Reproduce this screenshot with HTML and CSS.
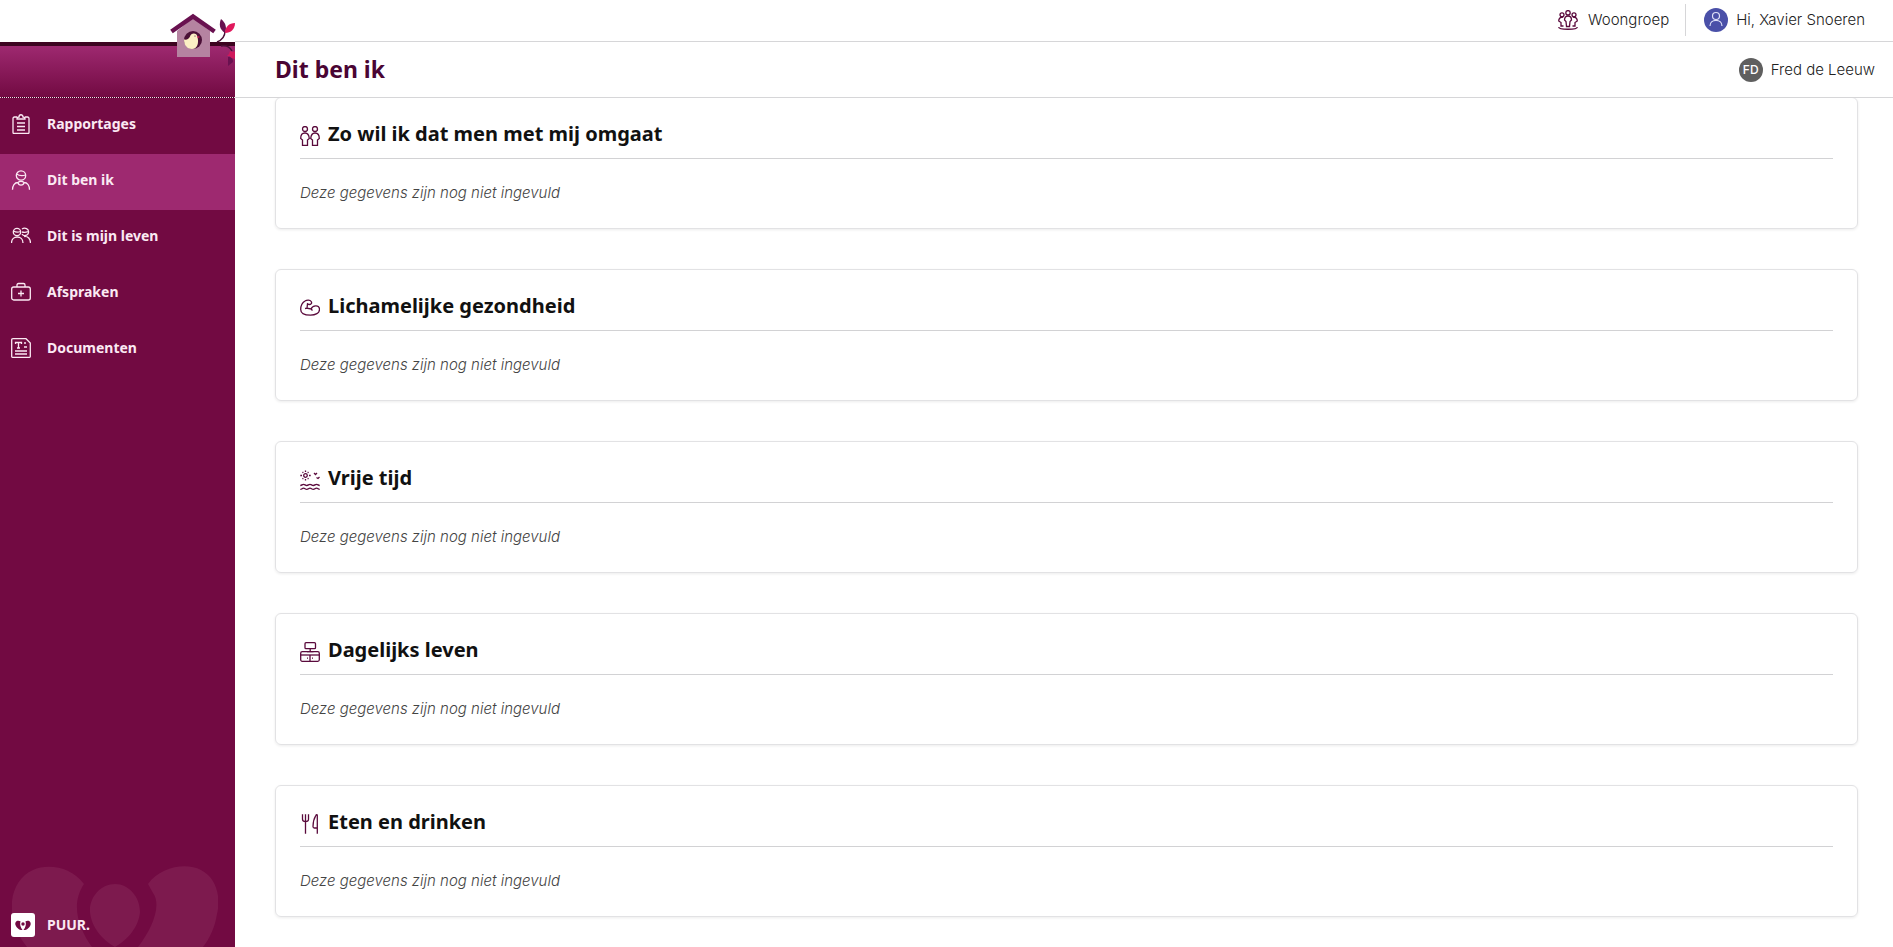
FILE: index.html
```html
<!DOCTYPE html>
<html lang="nl">
<head>
<meta charset="utf-8">
<title>Dit ben ik</title>
<link rel="stylesheet" href="styles.css">
</head>
<body>
<div class="app">
  <aside class="sidebar">
    <div class="brand">
      <svg class="birdhouse" viewBox="170 12 65 54" aria-hidden="true">
        <path d="M177 31 193 18 210 31V57H177Z" fill="#b583a1"/>
        <path d="M171.500 31.500 193 16.500 214.500 31.500" fill="none" stroke="#691150" stroke-width="4.500"/>
        <circle cx="193" cy="40" r="9" fill="#4b1037"/>
        <path d="M184 39.500c3 .5 5-.5 6-3 1-4 7-4 7.500.5 1.500 6 0 12-5.500 12-5 0-8-4-8-9.500z" fill="#fbefc4"/>
        <path d="m197.500 36 2.500 1-2.500 1z" fill="#e0205c"/><circle cx="195" cy="36" r=".6" fill="#4b1037"/>
        <path d="M217 42c5-2 8-6 8-11" fill="none" stroke="#4b1037" stroke-width="1.400"/>
        <path d="M225 33c-6-4-6-9-4-14 5 4 6 9 4 14z" fill="#691150"/>
        <path d="M225 33c0-6 4-10 10-10 0 6-4 10-10 10z" fill="#e0185c"/>
        <path d="M221 46c5-1 9 1 11 5" fill="none" stroke="#4b1037" stroke-width="1.400"/>
        <path d="M230 51l3 1 2-1v8l-3-1-1 1-1-3-3 0 2-2z" fill="#d0185c"/>
        <path d="M228 57c4 0 5 2 5 5l-5 4z" fill="#691150"/>
      </svg>
    </div>
    <nav class="menu">
      <a class="item" href="#rapportages">
        <svg class="icon" viewBox="0 0 20 20" aria-hidden="true"><path d="M6 3H3.500C2.500 3 2 3.500 2 4.500v14c0 .6.400 1 1 1h14c.6 0 1-.4 1-1v-14C18 3.500 17.500 3 16.500 3H14M6 5h8c0-1.500-.5-2-2-2 0-3-4-3-4 0-1.500 0-2 .5-2 2zM6 9h8M6 12.500h8M6 16h8"/></svg>
        <span>Rapportages</span></a>
      <a class="item active" href="#ditbenik" aria-current="page">
        <svg class="icon" viewBox="0 0 20 20" aria-hidden="true"><circle cx="10" cy="5.500" r="4.700"/><path d="M5.500 4c3 2 6 2 9 1M1.500 19.800c0-4 2-7.300 5.500-7.300 .5 3.500 5.500 3.500 6 0 3.500 0 5.500 3.300 5.500 7.300M7 12.500c1.500-1.500 4.500-1.500 6 0"/></svg>
        <span>Dit ben ik</span></a>
      <a class="item" href="#leven">
        <svg class="icon" viewBox="0 0 20 20" aria-hidden="true"><circle cx="6" cy="6" r="3.700"/><path d="M2.500 5c2.500 1.500 4.500 1.500 7 .5M.5 17c0-8 11.500-8 11.500 0M11 3c3-2 7 0 6.500 3.500S12.500 10.500 11 8M11 6c2 .5 4 .5 6-.5M13 10.500c4-.5 6.500 2.500 6.500 6.500"/></svg>
        <span>Dit is mijn leven</span></a>
      <a class="item" href="#afspraken">
        <svg class="icon" viewBox="0 0 20 20" aria-hidden="true"><rect x=".7" y="5" width="18.600" height="13" rx="2"/><path d="M6 5V3c0-1 .5-1.500 1.500-1.500h5C13.500 1.500 14 2 14 3v2M10 8.500v6M7 11.500h6"/></svg>
        <span>Afspraken</span></a>
      <a class="item" href="#documenten">
        <svg class="icon" viewBox="0 0 20 20" aria-hidden="true"><path d="M2 .7h13L19.300 5v13.500c0 .5-.3.800-.8.800H1.500c-.5 0-.8-.3-.8-.8V2C.7 1 1 .7 2 .7zM4.500 6V4.500h6V6M7.500 4.500V10M6 10h3M13 5h2M13 9h3M4 13h12M4 16h12"/></svg>
        <span>Documenten</span></a>
    </nav>
    <svg class="watermark" viewBox="12 866 206 81" aria-hidden="true">
      <path d="M84 884C72 867 48 863 33 870 17 877 10 895 12 913c2 14 7 24 15 34H92C79 929 70 905 84 884zM148 884c12-17 38-22 53-14 16 8 20 28 16 44-2 13-7 24-14 33H138c14-18 24-42 15-54zM115 884c-14 0-26 13-25 28 1 14 12 28 25 35 13-7 24-21 25-35 0-15-11-28-25-28z"/>
    </svg>
    <a class="puur" href="#puur">
      <svg class="puur-logo" viewBox="0 0 24 24" aria-hidden="true"><rect width="24" height="24" rx="3" fill="#fff"/><path d="M9.500 8.200C6 6.500 3.500 9 4.500 12c1 3 4 5.300 7 5C9.500 14.500 8.500 11 9.500 8.200zM14.500 8.200c3.500-1.700 6 .8 5 3.800-1 3-4 5.300-7 5 2-2.500 3-6 2-8.800z" fill="#720a42"/><circle cx="12" cy="11" r="1.700" fill="#720a42"/></svg>
      <span>PUUR.</span></a>
  </aside>
  <div class="page">
    <header class="header">
      <div class="topbar">
        <a class="group" href="#woongroep">
          <svg class="icon plum" viewBox="0 0 20 20" aria-hidden="true"><circle cx="10" cy="2.800" r="2.200"/><circle cx="4" cy="4.800" r="2"/><circle cx="16" cy="4.800" r="2"/><path d="M8.500 16.500 8 11.500 6.500 10c0-3 1.500-4 3.500-4s3.500 1 3.500 4L12 11.500l-.5 5zM5.500 16H3v-3.500L.7 11c0-3 1.500-4 4.500-4M14.500 16H17v-3.500l2.300-1.500c0-3-1.500-4-4.500-4M.7 17c0 3 18.600 3 18.600 0"/></svg>
          <span>Woongroep</span></a>
        <a class="user" href="#profiel">
          <svg class="avatar" viewBox="0 0 24 24" aria-hidden="true"><circle cx="12" cy="12" r="12" fill="#4a50a8"/><g fill="none" stroke="#dfe1f8" stroke-width="1.200"><circle cx="12" cy="8" r="3.500"/><path d="M6 18c0-7.500 12-7.500 12 0"/></g></svg>
          <span>Hi, Xavier Snoeren</span></a>
      </div>
      <div class="titlebar">
        <h1 class="title">Dit ben ik</h1>
        <a class="client" href="#client"><span class="initials">FD</span><span>Fred de Leeuw</span></a>
      </div>
    </header>
    <main class="cards">
      <section class="card">
        <h2 class="card-title"><svg class="icon plum" viewBox="0 0 20 20" aria-hidden="true"><circle cx="5" cy="3" r="2.500"/><circle cx="15" cy="3" r="2.500"/><path d="M2.500 19.300V14L.7 12.500C.7 9 2 7 5 7s4 2 4.300 5.500L7.500 14v5.300zM12.500 19.300V14l-1.800-1.500C11 9 12 7 15 7s4.300 2 4.300 5.500L17.500 14v5.300z"/></svg><span>Zo wil ik dat men met mij omgaat</span></h2>
        <p class="empty">Deze gegevens zijn nog niet ingevuld</p>
      </section>
      <section class="card">
        <h2 class="card-title"><svg class="icon plum" viewBox="0 0 20 20" aria-hidden="true"><path d="M5 3C7 1.700 10 1.700 11.200 3.500c1 1.500 0 3-2.200 3l-1.500-.8-.5 4.500L11 11C13 6.500 19.500 7 19.500 11.500c0 3.500-4 5.700-9 5.700-6 0-9.800-1.500-9.800-5.700C.7 8 2.500 4.500 5 3zM5 10.500l2-.3M11 11l1.500 1.500"/></svg><span>Lichamelijke gezondheid</span></h2>
        <p class="empty">Deze gegevens zijn nog niet ingevuld</p>
      </section>
      <section class="card">
        <h2 class="card-title"><svg class="icon plum" viewBox="0 0 20 20" aria-hidden="true"><circle cx="5.500" cy="5.500" r="1.800"/><path d="M5.500.5V2M5.500 9v1.500M.3 5.500H2M9 5.500h1.700M2.500 2l.8.8M8.500 2l-.8.8M2.500 9l.8-.8M8.500 9l-.8-.8M14 3l1.500 1.500L17 3M16.500 7.500l1.500 1 1.500-1.500M.3 15.500C2 15.500 2 14.300 3.500 14.300s1.700 1.200 3.300 1.200 1.700-1.200 3.200-1.200 1.700 1.200 3.300 1.200 1.700-1.200 3.200-1.200 1.700 1.200 3.200 1.200M.3 19.300C2 19.300 2 18.100 3.500 18.100s1.700 1.200 3.300 1.200 1.700-1.200 3.200-1.200 1.700 1.200 3.300 1.200 1.700-1.200 3.200-1.200 1.700 1.200 3.200 1.200"/></svg><span>Vrije tijd</span></h2>
        <p class="empty">Deze gegevens zijn nog niet ingevuld</p>
      </section>
      <section class="card">
        <h2 class="card-title"><svg class="icon plum" viewBox="0 0 20 20" aria-hidden="true"><rect x="5" y=".7" width="10.500" height="6" rx="1"/><path d="M10.200 6.700v3M7 9.700h6.500M10 13v6.300M7 16.200h1M12 16.200h1"/><rect x=".7" y="9.700" width="18.600" height="9.600" rx="1.500"/><path d="M.7 13h18.600"/></svg><span>Dagelijks leven</span></h2>
        <p class="empty">Deze gegevens zijn nog niet ingevuld</p>
      </section>
      <section class="card">
        <h2 class="card-title"><svg class="icon plum" viewBox="0 0 20 20" aria-hidden="true"><path d="M5.500.3v19.400M2.500.3v5c0 3 6 3 6 0v-5M17.300 19.700V1.500c0-1-1-1-1.500 0C14 4.500 13 8 13 12.500c0 1 .3 1.500 1.300 1.500h3"/></svg><span>Eten en drinken</span></h2>
        <p class="empty">Deze gegevens zijn nog niet ingevuld</p>
      </section>
    </main>
  </div>
</div>
</body>
</html>
```
FILE: styles.css
```css
* { box-sizing: border-box; }
body {
  margin: 0;
  background: #fff;
  color: #222;
  font: 300 15px/20px Inter, "Open Sans", sans-serif;
}
a { color: inherit; text-decoration: none; }
h1, h2, p { margin: 0; }
.app { display: flex; height: 100vh; overflow: hidden; }
.icon {
  width: 20px;
  height: 20px;
  flex: none;
  fill: none;
  stroke: currentColor;
  stroke-width: 1.3;
}
.plum { color: #5a0a3c; }

.sidebar {
  position: relative;
  display: flex;
  flex-direction: column;
  flex: none;
  width: 235px;
  background: #720a42;
  color: #fbe9f3;
  font: 700 14px/20px "Noto Sans", "Open Sans", sans-serif;
}
.brand {
  position: relative;
  height: 98px;
  border-top: 42px solid #fff;
  border-bottom: 1px dotted #f6dcea;
  background: linear-gradient(#3d0420 4px, #9e2970 4px, #720a42);
}
.birdhouse { position: absolute; right: 0; top: -30px; width: 65px; height: 54px; }
.item { display: flex; align-items: center; gap: 16px; height: 56px; padding: 0 11px 4px; }
.active { background: #9e2970; }
.watermark { position: absolute; left: 12px; bottom: 0; width: 206px; fill: #7d1a4e; }
.puur { position: relative; display: flex; align-items: center; gap: 12px; margin-top: auto; padding: 10px 11px; }
.puur-logo { width: 24px; height: 24px; }

.page { display: flex; flex-direction: column; flex: 1; min-width: 0; }
.header { position: relative; z-index: 1; flex: none; background: #fff; }
.topbar, .titlebar { display: flex; align-items: center; border-bottom: 1px solid #d6d6d8; }
.topbar { justify-content: flex-end; height: 42px; padding: 0 28px 2px 0; }
.titlebar { justify-content: space-between; height: 56px; padding: 0 18px 0 40px; }
.group, .user, .client { display: flex; align-items: center; gap: 8px; }
.group { gap: 10px; height: 32px; padding-right: 16px; border-right: 1px solid #d6d6d8; }
.user { padding-left: 18px; }
.avatar { width: 24px; height: 24px; }
.initials {
  width: 24px;
  height: 24px;
  border-radius: 50%;
  background: #5f5f5f;
  color: #fff;
  font-size: 12px;
  font-weight: 500;
  line-height: 24px;
  text-align: center;
}
.title { padding-bottom: 2px; color: #4a0534; font: 700 23px/32px "Noto Sans", "Open Sans", sans-serif; }

.cards {
  display: flex;
  flex-direction: column;
  gap: 40px;
  flex: 1;
  margin-top: -1px;
  padding: 0 35px 28px 40px;
  overflow: hidden;
}
.card {
  flex: none;
  padding: 20px 24px;
  border: 1px solid #e2e2e4;
  border-radius: 6px;
  box-shadow: 0 1px 3px rgba(0, 0, 0, 0.08);
}
.card-title {
  display: flex;
  align-items: center;
  gap: 8px;
  padding-bottom: 8px;
  border-bottom: 1px solid #d2d2d4;
  color: #111;
  font: 700 20px/32px "Noto Sans", "Open Sans", sans-serif;
}
.card-title .icon { margin-top: 3px; }
.empty { padding: 24px 0 5px; color: #444; font-style: italic; }
```
